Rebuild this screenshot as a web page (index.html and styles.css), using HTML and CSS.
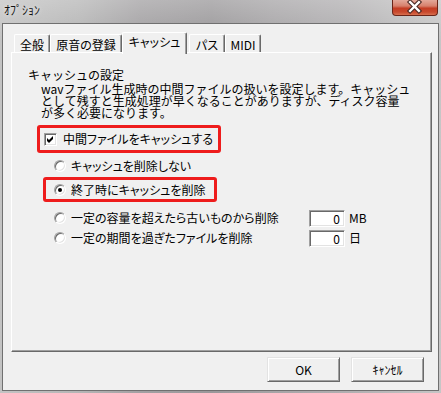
FILE: index.html
```html
<!DOCTYPE html>
<html lang="ja">
<head>
  <meta charset="UTF-8" />
  <meta name="viewport" content="width=device-width, initial-scale=1.0"/>
  <title>ｵﾌﾟｼｮﾝ</title>
  <link rel="stylesheet" href="styles.css">
</head>
<body>
  <div class="window">
    <div class="titlebar">
      <span class="title">ｵﾌﾟｼｮﾝ</span>
      <div class="close-btn">
        <svg width="46" height="16" viewBox="0 0 46 16">
          <path d="M18.5 3 L27.5 12 M27.5 3 L18.5 12" stroke="#4a2a26" stroke-width="4.6" stroke-linecap="square" fill="none"/>
          <path d="M18.5 3 L27.5 12 M27.5 3 L18.5 12" stroke="#ffffff" stroke-width="2.4" stroke-linecap="square" fill="none"/>
        </svg>
      </div>
    </div>

    <div class="client">
      <div class="tabs">
        <div class="tab">全般</div>
        <div class="tab tab-wide">原音の登録</div>
        <div class="tab active">キャッシュ</div>
        <div class="tab">パス</div>
        <div class="tab">MIDI</div>
      </div>

      <div class="panel">
        <div class="group-title">キャッシュの設定</div>
        <p class="desc">wavファイル生成時の中間ファイルの扱いを設定します。キャッシュ<br>として残すと生成処理が早くなることがありますが、ディスク容量<br>が多く必要になります。</p>

        <div class="mark mark-check">
          <span class="checkbox">
            <svg width="11" height="11" viewBox="0 0 11 11">
              <polygon points="2,4 4,6 8,2 8,5 4,9 2,7" fill="#000"/>
            </svg>
          </span>
          <span class="label">中間ファイルをキャッシュする</span>
        </div>

        <div class="option">
          <span class="radio"></span>
          <span class="label">キャッシュを削除しない</span>
        </div>

        <div class="mark mark-radio">
          <span class="radio checked"></span>
          <span class="label">終了時にキャッシュを削除</span>
        </div>

        <div class="option limit first-limit">
          <span class="radio"></span>
          <span class="label limit-label">一定の容量を超えたら古いものから削除</span>
          <span class="num-box">0</span>
          <span class="unit">MB</span>
        </div>
        <div class="option limit">
          <span class="radio"></span>
          <span class="label limit-label">一定の期間を過ぎたファイルを削除</span>
          <span class="num-box">0</span>
          <span class="unit">日</span>
        </div>
      </div>

      <div class="buttons">
        <button class="btn">OK</button>
        <button class="btn">ｷｬﾝｾﾙ</button>
      </div>
    </div>
  </div>
</body>
</html>
```

FILE: styles.css
```css
* {
  box-sizing: border-box;
}

body {
  margin: 0;
  font-family: "Noto Sans CJK JP", "Noto Sans", sans-serif;
  font-size: 12px;
  color: #000;
}

/* aero glass frame */
.window {
  width: 441px;
  height: 393px;
  padding: 0 2px;
  background:
    linear-gradient(to bottom, rgba(255,255,255,0.25), rgba(255,255,255,0) 40px),
    linear-gradient(to right, #c3c3c3 0%, #b5b5b5 18%, #a2a0a2 32%, #9a989a 48%, #a6a4a6 62%, #b0aeb0 78%, #c6c6c6 100%);
}

.titlebar {
  height: 23px;
  display: flex;
  justify-content: space-between;
  align-items: flex-start;
}

.title {
  padding: 4px 0 0 2px;
  line-height: 12px;
  color: #111;
  text-shadow: 0 0 4px rgba(255,255,255,0.8);
}

.close-btn {
  width: 46px;
  height: 16px;
  margin-right: 1px;
  border: 1px solid #6a2518;
  border-top: none;
  border-radius: 0 0 4px 4px;
  background: linear-gradient(to bottom, #e3a899 0%, #d7806c 40%, #c43d24 55%, #c8492d 80%, #d8704f 100%);
  display: flex;
}

.close-btn svg {
  display: block;
  margin: -1px 0 0 -1px;
}

.client {
  width: 437px;
  height: 368px;
  border: 1px solid #707070;
  background: #f0f0f0;
  padding: 8px 6px 0 8px;
}

/* tab strip */
.tabs {
  display: flex;
  align-items: flex-end;
  height: 21px;
  padding-left: 3px;
}

.tab {
  width: 36px;
  height: 19px;
  display: flex;
  align-items: center;
  justify-content: center;
  border-top: 1px solid #fff;
  border-left: 1px solid #fff;
  border-right: 1px solid #696969;
  box-shadow: inset -1px 0 #a0a0a0;
  border-radius: 2px 2px 0 0;
  font-feature-settings: "palt";
  line-height: 12px;
  padding-top: 1px;
}

.tab-wide {
  width: 72px;
}

.tab.active {
  width: 65px;
  height: 22px;
  margin-right: 2px;
  margin-bottom: -1px;
  padding: 0 0 3px;
  background: #f0f0f0;
  position: relative;
  z-index: 2;
}

.panel {
  position: relative;
  z-index: 1;
  width: 421px;
  height: 300px;
  margin-top: -1px;
  border-top: 1px solid #fff;
  border-left: 1px solid #fff;
  border-right: 1px solid #696969;
  border-bottom: 1px solid #696969;
  box-shadow: inset -1px -1px #a0a0a0;
  padding: 16px 0 0 16px;
}

.group-title {
  line-height: 12px;
}

.desc {
  margin: 2px 0 0 13px;
  line-height: 12px;
}

.label {
  font-feature-settings: "palt";
  line-height: 12px;
  white-space: nowrap;
}

/* red annotation frames */
.mark {
  display: flex;
  align-items: center;
  width: fit-content;
  border: 3px solid #ee1c1c;
  border-radius: 3px;
}

.mark-check {
  height: 28px;
  margin: 6px 0 0 9px;
  padding: 0 5px 0 4px;
  gap: 6px;
}

.mark-radio {
  height: 25px;
  margin-left: 15px;
  padding: 0 9px 0 8px;
  gap: 5px;
}

.option {
  display: flex;
  align-items: center;
  gap: 5px;
  height: 22px;
  margin: 2px 0 0 26px;
}

.limit {
  height: 20px;
  margin-top: 0;
}

.first-limit {
  margin-top: 6px;
}

.limit-label {
  width: 238px;
}

.checkbox {
  width: 13px;
  height: 13px;
  background: #fff;
  border: 1px solid;
  border-color: #a0a0a0 #fff #fff #a0a0a0;
  box-shadow: inset 1px 1px #696969, inset -1px -1px #e3e3e3;
  display: flex;
  align-items: center;
  justify-content: center;
}

.checkbox svg {
  display: block;
}

.radio {
  width: 12px;
  height: 12px;
  flex: none;
  border-radius: 50%;
  background: #fff;
  border: 1px solid;
  border-color: #a0a0a0 #fff #fff #a0a0a0;
  box-shadow: inset 1px 1px #696969, inset -1px -1px #e3e3e3;
  display: flex;
  align-items: center;
  justify-content: center;
}

.radio.checked::after {
  content: "";
  width: 4px;
  height: 4px;
  border-radius: 50%;
  background: #000;
}

.num-box {
  width: 36px;
  height: 17px;
  margin-left: -5px;
  background: #fff;
  border: 1px solid;
  border-color: #a0a0a0 #fff #fff #a0a0a0;
  box-shadow: inset 1px 1px #696969, inset -1px -1px #e3e3e3;
  text-align: right;
  padding-right: 4px;
  line-height: 15px;
}

.unit {
  margin-left: -1px;
  line-height: 12px;
}

.buttons {
  display: flex;
  justify-content: flex-end;
  gap: 11px;
  margin-top: 5px;
  padding-right: 8px;
}

.btn {
  width: 73px;
  height: 25px;
  font-family: inherit;
  font-size: 12px;
  line-height: 12px;
  color: #000;
  background: #f0f0f0;
  border: 1px solid;
  border-color: #e3e3e3 #696969 #696969 #e3e3e3;
  box-shadow: inset 1px 1px #fff, inset -1px -1px #a0a0a0;
  padding: 0;
}
```
